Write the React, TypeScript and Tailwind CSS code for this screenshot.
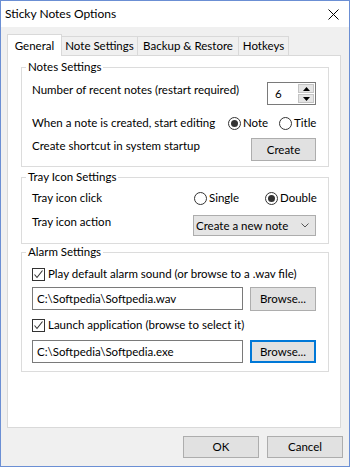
import React from "react";

const font = { fontFamily: "Lato, 'Noto Sans', 'Liberation Sans', sans-serif" };

function Radio({ checked, label, w }: { checked?: boolean; label: string; w: string }) {
  return (
    <div className={`flex items-center ${w}`}>
      <div className="w-[13px] h-[13px] rounded-full border border-[#333333] bg-white flex items-center justify-center shrink-0">
        {checked && <div className="w-[7px] h-[7px] rounded-full bg-[#333333]" />}
      </div>
      <span className="ml-[2px] leading-[16px]">{label}</span>
    </div>
  );
}

function Checkbox({ label }: { label: string }) {
  return (
    <div className="flex items-center h-[16px]">
      <div className="w-[13px] h-[13px] border border-[#333333] bg-white shrink-0 flex items-center justify-center">
        <svg width="11" height="11" viewBox="0 0 11 11">
          <path d="M1.5 5.5 L4 8.5 L9.5 1.5" fill="none" stroke="#333333" strokeWidth="1.1" />
        </svg>
      </div>
      <span className="ml-[3px] leading-[16px]">{label}</span>
    </div>
  );
}

function Button({ label, w, h, focused }: { label: string; w: string; h: string; focused?: boolean }) {
  return (
    <div
      className={`${w} ${h} flex items-center justify-center bg-[#e1e1e1] border ${
        focused ? "border-[#0078d7] shadow-[inset_0_0_0_1px_#0078d7]" : "border-[#adadad]"
      }`}
    >
      <span className="leading-[16px]">{label}</span>
    </div>
  );
}

function Group({ title, className, children }: { title: string; className: string; children: React.ReactNode }) {
  return (
    <div className={`relative w-[308px] border border-[#dcdcdc] pl-[10px] pr-[12px] flex flex-col ${className}`}>
      <span className="absolute left-[4px] top-[-9px] bg-white px-[2px] leading-[16px]">{title}</span>
      {children}
    </div>
  );
}

function TextBox({ value, h }: { value: string; h: string }) {
  return (
    <div className={`w-[211px] ${h} border border-[#7a7a7a] bg-white flex items-center pl-[4px]`}>
      <span className="leading-[16px]">{value}</span>
    </div>
  );
}

export default function App() {
  return (
    <div
      style={font}
      className="w-[350px] h-[467px] border border-[#6b8fd4] bg-[#f0f0f0] flex flex-col text-[11.5px] text-black"
    >
      {/* Title bar */}
      <div className="h-[26px] bg-white flex items-center justify-between pl-[4px] pr-[10px] shrink-0">
        <span className="leading-[16px] text-[12px]">Sticky Notes Options</span>
        <svg width="11" height="11" viewBox="0 0 11 11">
          <path d="M0.5 0.5 L10.5 10.5 M10.5 0.5 L0.5 10.5" fill="none" stroke="#000" strokeWidth="1" />
        </svg>
      </div>

      <div className="flex-1 flex flex-col px-[6px]">
        {/* Tabs */}
        <div className="mt-[7px] h-[21px] flex items-end">
          <div className="relative z-10 w-[55px] h-[22px] mb-[-1px] bg-white border-l border-t border-r border-[#d9d9d9] flex items-center justify-center">
            <span className="leading-[16px]">General</span>
          </div>
          <div className="w-[76px] h-[19px] border-t border-r border-[#d9d9d9] flex items-center justify-center">
            <span className="leading-[16px]">Note Settings</span>
          </div>
          <div className="w-[101px] h-[19px] border-t border-r border-[#d9d9d9] flex items-center justify-center">
            <span className="leading-[16px]">Backup &amp; Restore</span>
          </div>
          <div className="w-[50px] h-[19px] border-t border-r border-[#d9d9d9] flex items-center justify-center">
            <span className="leading-[16px]">Hotkeys</span>
          </div>
        </div>

        {/* Panel */}
        <div className="w-[334px] h-[373px] border border-[#d9d9d9] bg-white pl-[13px] pt-[11px] flex flex-col">
          <Group title="Notes Settings" className="pt-[14px] pb-[5px]">
            <div className="h-[23px] flex justify-between items-start">
              <span className="leading-[16px]">Number of recent notes (restart required)</span>
              <div className="w-[49px] h-[23px] border border-[#7a7a7a] bg-white flex">
                <div className="flex-1 flex items-center pl-[7px]">
                  <span className="leading-[16px]">6</span>
                </div>
                <div className="w-[17px] flex flex-col gap-[1px] py-[1px] pr-[1px]">
                  <div className="flex-1 bg-[#e5e5e5] border border-[#c4c4c4] flex items-center justify-center">
                    <svg width="7" height="4" viewBox="0 0 7 4">
                      <path d="M0 4 L3.5 0 L7 4 Z" fill="#000" />
                    </svg>
                  </div>
                  <div className="flex-1 bg-[#e5e5e5] border border-[#c4c4c4] flex items-center justify-center">
                    <svg width="7" height="4" viewBox="0 0 7 4">
                      <path d="M0 0 L3.5 4 L7 0 Z" fill="#000" />
                    </svg>
                  </div>
                </div>
              </div>
            </div>
            <div className="mt-[10px] h-[16px] flex justify-between items-center">
              <span className="leading-[16px]">When a note is created, start editing</span>
              <div className="flex items-center">
                <Radio checked label="Note" w="w-[51px]" />
                <Radio label="Title" w="w-[37px]" />
              </div>
            </div>
            <div className="mt-[7px] h-[23px] flex justify-between items-start">
              <span className="leading-[16px]">Create shortcut in system startup</span>
              <Button label="Create" w="w-[65px]" h="h-[23px]" />
            </div>
          </Group>

          <Group title="Tray Icon Settings" className="mt-[10px] pt-[12px] pb-[7px]">
            <div className="h-[16px] flex justify-between items-center">
              <span className="leading-[16px]">Tray icon click</span>
              <div className="flex items-center">
                <Radio label="Single" w="w-[71px]" />
                <Radio checked label="Double" w="w-[51px]" />
              </div>
            </div>
            <div className="mt-[8px] h-[22px] flex justify-between items-start">
              <span className="leading-[16px]">Tray icon action</span>
              <div className="mt-[1px] w-[123px] h-[21px] border border-[#adadad] bg-[#e5e5e5] flex items-center justify-between pl-[2px] pr-[6px]">
                <span className="leading-[16px]">Create a new note</span>
                <svg width="8" height="5" viewBox="0 0 8 5">
                  <path d="M0.5 0.5 L4 4 L7.5 0.5" fill="none" stroke="#555" strokeWidth="1" />
                </svg>
              </div>
            </div>
          </Group>

          <Group title="Alarm Settings" className="mt-[8px] pt-[13px] pb-[8px]">
            <Checkbox label="Play default alarm sound (or browse to a .wav file)" />
            <div className="mt-[5px] flex justify-between items-start">
              <TextBox value="C:\Softpedia\Softpedia.wav" h="h-[23px]" />
              <Button label="Browse..." w="w-[66px]" h="h-[24px]" />
            </div>
            <div className="mt-[6px]">
              <Checkbox label="Launch application (browse to select it)" />
            </div>
            <div className="mt-[7px] flex justify-between items-start">
              <TextBox value="C:\Softpedia\Softpedia.exe" h="h-[23px]" />
              <Button label="Browse..." w="w-[66px]" h="h-[23px]" focused />
            </div>
          </Group>
        </div>

        {/* Bottom buttons */}
        <div className="mt-[8px] flex justify-end gap-[8px]">
          <Button label="OK" w="w-[76px]" h="h-[22px]" />
          <Button label="Cancel" w="w-[76px]" h="h-[22px]" />
        </div>
      </div>
    </div>
  );
}
